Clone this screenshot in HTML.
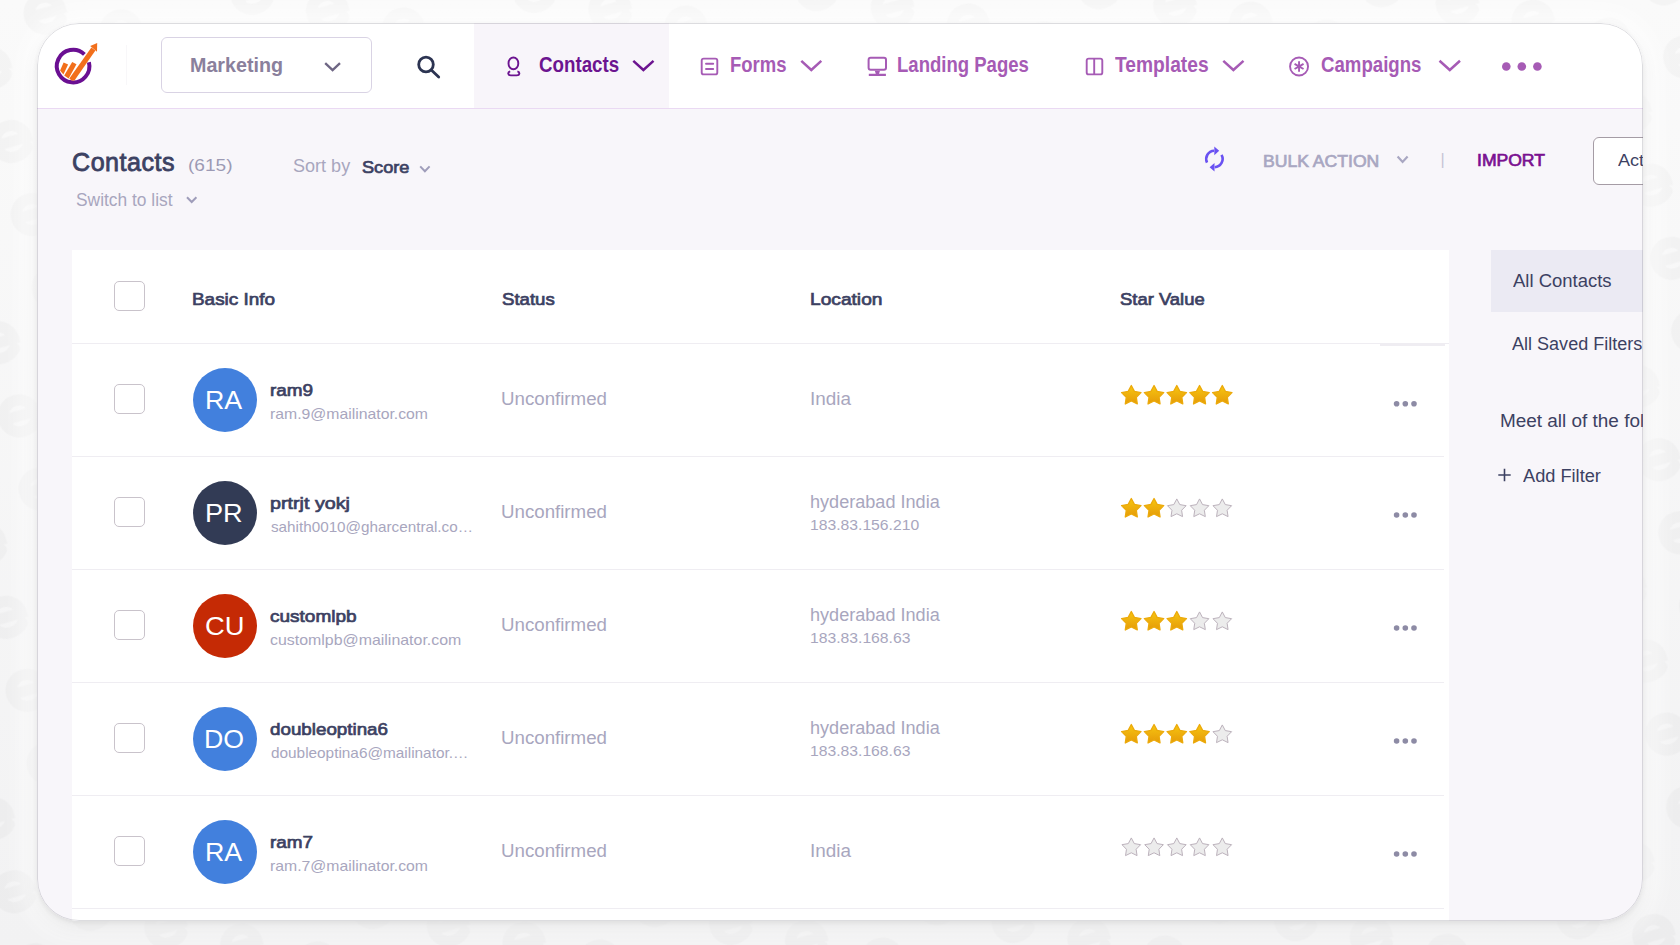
<!DOCTYPE html>
<html lang="en">
<head>
<meta charset="utf-8">
<title>Contacts</title>
<style>
html,body{margin:0;padding:0;}
body{width:1680px;height:945px;overflow:hidden;position:relative;background:#f7f7f8;font-family:"Liberation Sans",sans-serif;}
.bg{position:absolute;left:0;top:0;width:1680px;height:945px;}
.card{position:absolute;left:37px;top:23px;width:1606px;height:898px;border-radius:42px;background:#f8f6fa;overflow:hidden;
  box-shadow:0 8px 16px rgba(60,60,70,.08), 0 2px 4px rgba(60,60,70,.08), 0 0 26px 12px rgba(255,255,255,.75);}
.card::after{content:'';position:absolute;left:0;top:0;right:0;bottom:0;border-radius:42px;border:1px solid rgba(120,120,130,.26);z-index:5;}
.abs{position:absolute;}
.t{position:absolute;white-space:nowrap;transform-origin:0 50%;}
.hdr{left:0;top:0;width:1606px;height:85px;background:#fff;border-bottom:1px solid #ead9f3;}
.navact{left:437px;top:0;width:195px;height:85px;background:#f8f5fa;}
.dd{left:124px;top:14px;width:209px;height:54px;border:1px solid #d9d3e4;border-radius:6px;background:#fff;}
.tbl{left:35px;top:227px;width:1377px;height:700px;background:#fff;}
.line{position:absolute;left:35px;width:1372px;height:1px;background:#efedf2;}
.cb{position:absolute;left:77.3px;width:28.4px;height:28.4px;border:1px solid #c9c3cb;border-radius:5px;background:#fff;}
.av{position:absolute;left:156px;width:64px;height:64px;border-radius:50%;}
.allc{left:1454px;top:227px;width:160px;height:62px;background:#ebeaf3;}
.btn{left:1555.8px;top:114.3px;width:80px;height:45.6px;border:1.2px solid #a59ca5;border-radius:6px;background:#fff;}
.vdiv{left:89px;top:22px;width:1px;height:40px;background:#f8f7f9;}
.clip{position:absolute;left:0;top:0;width:1643px;height:921px;overflow:hidden;}
svg{position:absolute;overflow:visible;}
</style>
</head>
<body>
<svg class="bg" width="1680" height="945" viewBox="0 0 1680 945">
<defs>
<pattern id="pat" width="136" height="76" patternUnits="userSpaceOnUse" patternTransform="translate(10,-8) rotate(-16)">
<g fill="none" stroke="#000" stroke-opacity=".024" stroke-width="11" stroke-linecap="round">
<path id="ee" d="M12 30 H44 A16 16 0 1 0 28 46 Q37 46 42 40"/>
<use href="#ee" x="68" y="38"/>
<use href="#ee" x="68" y="-38"/>
</g>
</pattern>
<linearGradient id="bgg" x1="0" y1="0" x2="0" y2="1"><stop offset="0" stop-color="#fafafa"/><stop offset="1" stop-color="#f2f2f3"/></linearGradient>
</defs>
<rect width="1680" height="945" fill="url(#bgg)"/>
<rect width="1680" height="945" fill="url(#pat)"/>
</svg>
<div class="card">
<div class="abs hdr"></div>
<div class="abs navact"></div>
<div class="abs dd"></div>
<div class="abs vdiv"></div>
<div class="abs tbl"></div>
<div class="abs allc"></div>
<div class="abs btn"></div>
<div class="line" style="top:320px;width:1377px"></div>
<div class="abs" style="left:1343px;top:321px;width:64.5px;height:2px;background:#efedf2"></div>
<div class="line" style="top:433px"></div>
<div class="line" style="top:546px"></div>
<div class="line" style="top:659px"></div>
<div class="line" style="top:772px"></div>
<div class="line" style="top:885px"></div>
<div class="cb" style="top:258px"></div>
<div class="cb" style="top:361px"></div>
<div class="cb" style="top:474px"></div>
<div class="cb" style="top:587px"></div>
<div class="cb" style="top:700px"></div>
<div class="cb" style="top:813px"></div>
<div class="av" style="top:345px;background:#4280dd"></div>
<div class="av" style="top:458px;background:#323b55"></div>
<div class="av" style="top:571px;background:#c52a05"></div>
<div class="av" style="top:684px;background:#4280dd"></div>
<div class="av" style="top:797px;background:#4280dd"></div>
</div>
<div class="clip">
<svg class="ic" width="1680" height="945" viewBox="0 0 1680 945" style="left:0;top:0">
<g id="logo">
<path d="M88.92 62.16 A16.3 16.3 0 1 1 84.42 54.37" fill="none" stroke="#6a0f92" stroke-width="4"/>
<clipPath id="lc"><path d="M40 30 H110 V66 H91 A18 18 0 0 1 55 66 Z" transform="translate(0,0)"/></clipPath>
<g fill="#f26f1b">
<polygon points="60.1,70.6 63.6,62.6 68.1,64.5 63.4,74.6"/>
<polygon points="64.2,75.4 72.2,62 76.5,64.3 68.6,78.4"/>
<polygon points="69.3,78.6 91.4,47.4 95.4,50.6 74.5,80.6 71.6,80.4"/>
<polygon points="97.2,43 90.2,46 97,51.8"/>
</g></g>
<path d="M325.2 63.2 L332.6 70.2 L340 63.2" fill="none" stroke="#6e6684" stroke-width="2.3"/>
<g fill="none" stroke="#2c3452" stroke-width="2.8"><circle cx="426" cy="64.5" r="7.3"/><path d="M431.3 70 L438.7 77.1" stroke-linecap="round"/></g>
<path d="M633.3 60.8 L643.4 70.0 L653.5 60.8" fill="none" stroke="#6c1490" stroke-width="2.5"/>
<path d="M801.3 60.8 L811.3 70.0 L821.3 60.8" fill="none" stroke="#a65bb5" stroke-width="2.5"/>
<path d="M1223.3 60.8 L1233.4 70.0 L1243.5 60.8" fill="none" stroke="#a65bb5" stroke-width="2.5"/>
<path d="M1439.5 60.8 L1449.8 70.0 L1460.0 60.8" fill="none" stroke="#a65bb5" stroke-width="2.5"/>
<g fill="none" stroke="#6c1490" stroke-width="1.9"><ellipse cx="513.4" cy="63.4" rx="4.9" ry="5.9"/><path d="M510.2 71.4 C507.4 72.2 507.6 75.4 511 75.4 H516.6 C520 75.4 520.2 72.2 517.4 71.4"/></g>
<g fill="none" stroke="#a65bb5" stroke-width="1.9"><rect x="701.7" y="58.6" width="15.6" height="15.8" rx="2"/><path d="M706 63.8 H713.2 M706 69 H713.2" stroke-linecap="round"/></g>
<g fill="none" stroke="#a65bb5"><rect x="868.6" y="57.7" width="17.4" height="12" rx="2" stroke-width="2"/></g>
<path d="M874.8 70.7 H880 L879 73.7 H885.9 V76 H868.8 V73.7 H875.8 Z" fill="#a65bb5"/>
<g fill="none" stroke="#a65bb5" stroke-width="1.9"><rect x="1086.7" y="58.6" width="15.6" height="15.8" rx="2"/><path d="M1094.2 58.6 V74.4"/></g>
<g fill="none" stroke="#a65bb5" stroke-width="1.9"><circle cx="1299.05" cy="66.45" r="9"/><path d="M1299.05 61.25 L1299.05 71.65 M1294.55 63.85 L1303.55 69.05 M1303.55 63.85 L1294.55 69.05 " stroke-width="1.9"/></g>
<circle cx="1506.3" cy="66.5" r="4.3" fill="#a65bb5"/>
<circle cx="1521.8" cy="66.5" r="4.3" fill="#a65bb5"/>
<circle cx="1537.4" cy="66.5" r="4.3" fill="#a65bb5"/>
<path d="M420.2 166.4 L424.9 171.2 L429.6 166.4" fill="none" stroke="#9f9dba" stroke-width="2"/>
<path d="M187.0 197.2 L191.7 202.0 L196.4 197.2" fill="none" stroke="#9f9dba" stroke-width="2"/>
<path d="M1397.6 156.6 L1402.6 162.0 L1407.6 156.6" fill="none" stroke="#a9a7c2" stroke-width="2.2"/>
<g fill="none" stroke="#6a52f2" stroke-width="2.6"><path d="M1207.03 162.59 A8.2 8.2 0 0 1 1214.11 150.80"/><path d="M1221.50 154.90 A8.2 8.2 0 0 1 1214.69 167.20"/></g>
<polygon points="1214.3,146.4 1219.2,150.8 1214.3,155.2" fill="#6a52f2"/>
<polygon points="1214.5,162.9 1209.6,167.2 1214.5,171.6" fill="#6a52f2"/>
<path d="M1498.3 475 H1510.7 M1504.5 468.8 V481.2" stroke="#3c4162" stroke-width="1.6" fill="none"/>
<circle cx="1396.6" cy="403.8" r="2.8" fill="#8d8ba5"/>
<circle cx="1405.3" cy="403.8" r="2.8" fill="#8d8ba5"/>
<circle cx="1414" cy="403.8" r="2.8" fill="#8d8ba5"/>
<circle cx="1396.6" cy="515" r="2.8" fill="#8d8ba5"/>
<circle cx="1405.3" cy="515" r="2.8" fill="#8d8ba5"/>
<circle cx="1414" cy="515" r="2.8" fill="#8d8ba5"/>
<circle cx="1396.6" cy="628" r="2.8" fill="#8d8ba5"/>
<circle cx="1405.3" cy="628" r="2.8" fill="#8d8ba5"/>
<circle cx="1414" cy="628" r="2.8" fill="#8d8ba5"/>
<circle cx="1396.6" cy="741" r="2.8" fill="#8d8ba5"/>
<circle cx="1405.3" cy="741" r="2.8" fill="#8d8ba5"/>
<circle cx="1414" cy="741" r="2.8" fill="#8d8ba5"/>
<circle cx="1396.6" cy="854" r="2.8" fill="#8d8ba5"/>
<circle cx="1405.3" cy="854" r="2.8" fill="#8d8ba5"/>
<circle cx="1414" cy="854" r="2.8" fill="#8d8ba5"/>
<defs><linearGradient id="sg" x1="0" y1="0" x2="0" y2="1"><stop offset="0" stop-color="#f7c80f"/><stop offset=".45" stop-color="#efb20d"/><stop offset="1" stop-color="#e59b08"/></linearGradient>
<polygon id="st" points="0.00,-10.20 3.12,-4.29 9.70,-3.15 5.04,1.64 6.00,8.25 0.00,5.30 -6.00,8.25 -5.04,1.64 -9.70,-3.15 -3.12,-4.29" stroke-linejoin="round"/></defs>
<use href="#st" x="1131.30" y="395.70" fill="url(#sg)" stroke="#ecaa0b" stroke-width="1.3"/>
<use href="#st" x="1154.05" y="395.70" fill="url(#sg)" stroke="#ecaa0b" stroke-width="1.3"/>
<use href="#st" x="1176.80" y="395.70" fill="url(#sg)" stroke="#ecaa0b" stroke-width="1.3"/>
<use href="#st" x="1199.55" y="395.70" fill="url(#sg)" stroke="#ecaa0b" stroke-width="1.3"/>
<use href="#st" x="1222.30" y="395.70" fill="url(#sg)" stroke="#ecaa0b" stroke-width="1.3"/>
<use href="#st" x="1131.30" y="508.70" fill="url(#sg)" stroke="#ecaa0b" stroke-width="1.3"/>
<use href="#st" x="1154.05" y="508.70" fill="url(#sg)" stroke="#ecaa0b" stroke-width="1.3"/>
<use href="#st" x="1176.80" y="508.70" fill="#ececec" stroke="#b9afb9" stroke-width="1" transform="translate(1176.80,508.70) scale(.96) translate(-1176.80,-508.70)"/>
<use href="#st" x="1199.55" y="508.70" fill="#ececec" stroke="#b9afb9" stroke-width="1" transform="translate(1199.55,508.70) scale(.96) translate(-1199.55,-508.70)"/>
<use href="#st" x="1222.30" y="508.70" fill="#ececec" stroke="#b9afb9" stroke-width="1" transform="translate(1222.30,508.70) scale(.96) translate(-1222.30,-508.70)"/>
<use href="#st" x="1131.30" y="621.70" fill="url(#sg)" stroke="#ecaa0b" stroke-width="1.3"/>
<use href="#st" x="1154.05" y="621.70" fill="url(#sg)" stroke="#ecaa0b" stroke-width="1.3"/>
<use href="#st" x="1176.80" y="621.70" fill="url(#sg)" stroke="#ecaa0b" stroke-width="1.3"/>
<use href="#st" x="1199.55" y="621.70" fill="#ececec" stroke="#b9afb9" stroke-width="1" transform="translate(1199.55,621.70) scale(.96) translate(-1199.55,-621.70)"/>
<use href="#st" x="1222.30" y="621.70" fill="#ececec" stroke="#b9afb9" stroke-width="1" transform="translate(1222.30,621.70) scale(.96) translate(-1222.30,-621.70)"/>
<use href="#st" x="1131.30" y="734.70" fill="url(#sg)" stroke="#ecaa0b" stroke-width="1.3"/>
<use href="#st" x="1154.05" y="734.70" fill="url(#sg)" stroke="#ecaa0b" stroke-width="1.3"/>
<use href="#st" x="1176.80" y="734.70" fill="url(#sg)" stroke="#ecaa0b" stroke-width="1.3"/>
<use href="#st" x="1199.55" y="734.70" fill="url(#sg)" stroke="#ecaa0b" stroke-width="1.3"/>
<use href="#st" x="1222.30" y="734.70" fill="#ececec" stroke="#b9afb9" stroke-width="1" transform="translate(1222.30,734.70) scale(.96) translate(-1222.30,-734.70)"/>
<use href="#st" x="1131.30" y="847.70" fill="#ececec" stroke="#b9afb9" stroke-width="1" transform="translate(1131.30,847.70) scale(.96) translate(-1131.30,-847.70)"/>
<use href="#st" x="1154.05" y="847.70" fill="#ececec" stroke="#b9afb9" stroke-width="1" transform="translate(1154.05,847.70) scale(.96) translate(-1154.05,-847.70)"/>
<use href="#st" x="1176.80" y="847.70" fill="#ececec" stroke="#b9afb9" stroke-width="1" transform="translate(1176.80,847.70) scale(.96) translate(-1176.80,-847.70)"/>
<use href="#st" x="1199.55" y="847.70" fill="#ececec" stroke="#b9afb9" stroke-width="1" transform="translate(1199.55,847.70) scale(.96) translate(-1199.55,-847.70)"/>
<use href="#st" x="1222.30" y="847.70" fill="#ececec" stroke="#b9afb9" stroke-width="1" transform="translate(1222.30,847.70) scale(.96) translate(-1222.30,-847.70)"/>
</svg>
<span class="t" id="t0" style="left:189.50px;top:52.90px;font-size:21px;line-height:23px;font-weight:700;color:#8a809c;transform:scaleX(0.9373);">Marketing</span>
<span class="t" id="t1" style="left:539.05px;top:51.60px;font-size:22px;line-height:25px;font-weight:700;color:#6c1490;transform:scaleX(0.8514);">Contacts</span>
<span class="t" id="t2" style="left:729.50px;top:51.60px;font-size:22px;line-height:25px;font-weight:700;color:#a65bb5;transform:scaleX(0.8406);">Forms</span>
<span class="t" id="t3" style="left:897.00px;top:51.60px;font-size:22px;line-height:25px;font-weight:700;color:#a65bb5;transform:scaleX(0.8429);">Landing Pages</span>
<span class="t" id="t4" style="left:1115.00px;top:51.60px;font-size:22px;line-height:25px;font-weight:700;color:#a65bb5;transform:scaleX(0.8730);">Templates</span>
<span class="t" id="t5" style="left:1320.50px;top:51.60px;font-size:22px;line-height:25px;font-weight:700;color:#a65bb5;transform:scaleX(0.8469);">Campaigns</span>
<span class="t" id="t6" style="left:72.00px;top:147.50px;font-size:25px;line-height:28px;font-weight:400;color:#3c4162;transform:scaleX(1.0039);letter-spacing:0.5px;-webkit-text-stroke:0.8px #3c4162;">Contacts</span>
<span class="t" id="t7" style="left:187.90px;top:155.50px;font-size:16.2px;line-height:18px;font-weight:400;color:#9c9ab4;transform:scaleX(1.1786);">(615)</span>
<span class="t" id="t8" style="left:293.30px;top:156.30px;font-size:18px;line-height:20px;font-weight:400;color:#a8a6be;transform:scaleX(1.0024);">Sort by</span>
<span class="t" id="t9" style="left:361.50px;top:158.30px;font-size:17px;line-height:19px;font-weight:400;color:#3c4162;transform:scaleX(1.0677);-webkit-text-stroke:0.7px #3c4162;">Score</span>
<span class="t" id="t10" style="left:76.30px;top:189.70px;font-size:17.5px;line-height:20px;font-weight:400;color:#a8a6be;transform:scaleX(0.9924);">Switch to list</span>
<span class="t" id="t11" style="left:1263.00px;top:151.50px;font-size:17px;line-height:19px;font-weight:400;color:#a9a7c2;transform:scaleX(1.0347);-webkit-text-stroke:0.7px #a9a7c2;">BULK ACTION</span>
<span class="t" id="t12" style="left:1440.40px;top:151.00px;font-size:16px;line-height:17px;font-weight:400;color:#c5c3d5;transform:scaleX(1.0000);">|</span>
<span class="t" id="t13" style="left:1476.50px;top:151.20px;font-size:17px;line-height:19px;font-weight:400;color:#7a1090;transform:scaleX(1.0328);-webkit-text-stroke:0.7px #7a1090;">IMPORT</span>
<span class="t" id="t14" style="left:1617.74px;top:150.40px;font-size:17.2px;line-height:20px;font-weight:400;color:#3c4162;transform:scaleX(1.0500);">Act</span>
<span class="t" id="t15" style="left:192.00px;top:289.80px;font-size:17px;line-height:19px;font-weight:400;color:#3c4162;transform:scaleX(1.1123);-webkit-text-stroke:0.7px #3c4162;">Basic Info</span>
<span class="t" id="t16" style="left:501.50px;top:289.80px;font-size:17px;line-height:19px;font-weight:400;color:#3c4162;transform:scaleX(1.0953);-webkit-text-stroke:0.7px #3c4162;">Status</span>
<span class="t" id="t17" style="left:810.00px;top:289.80px;font-size:17px;line-height:19px;font-weight:400;color:#3c4162;transform:scaleX(1.1271);-webkit-text-stroke:0.7px #3c4162;">Location</span>
<span class="t" id="t18" style="left:1119.50px;top:289.80px;font-size:17px;line-height:19px;font-weight:400;color:#3c4162;transform:scaleX(1.0834);-webkit-text-stroke:0.7px #3c4162;">Star Value</span>
<span class="t" id="t19" style="left:1512.50px;top:270.70px;font-size:17.5px;line-height:20px;font-weight:400;color:#3c4162;transform:scaleX(1.0560);">All Contacts</span>
<span class="t" id="t20" style="left:1512.00px;top:333.60px;font-size:17.5px;line-height:20px;font-weight:400;color:#3c4162;transform:scaleX(1.0305);">All Saved Filters</span>
<span class="t" id="t21" style="left:1499.50px;top:411.30px;font-size:17.5px;line-height:20px;font-weight:400;color:#3c4162;transform:scaleX(1.0817);">Meet all of the fol</span>
<span class="t" id="t22" style="left:1523.00px;top:466.40px;font-size:17.5px;line-height:20px;font-weight:400;color:#3c4162;transform:scaleX(1.0397);">Add Filter</span>
<span class="t" id="t23" style="left:205.42px;top:385.30px;font-size:26px;line-height:30px;font-weight:400;color:#ffffff;transform:scaleX(1.0298);">RA</span>
<span class="t" id="t24" style="left:270.05px;top:380.80px;font-size:17px;line-height:19px;font-weight:400;color:#3c4162;transform:scaleX(1.1119);-webkit-text-stroke:0.7px #3c4162;">ram9</span>
<span class="t" id="t25" style="left:269.80px;top:405.00px;font-size:15px;line-height:17px;font-weight:400;color:#a8a6be;transform:scaleX(1.0513);">ram.9@mailinator.com</span>
<span class="t" id="t26" style="left:501.20px;top:389.00px;font-size:17.5px;line-height:20px;font-weight:400;color:#a8a6be;transform:scaleX(1.0680);">Unconfirmed</span>
<span class="t" id="t27" style="left:809.70px;top:388.80px;font-size:17.5px;line-height:20px;font-weight:400;color:#a8a6be;transform:scaleX(1.0797);">India</span>
<span class="t" id="t28" style="left:205.25px;top:498.30px;font-size:26px;line-height:30px;font-weight:400;color:#ffffff;transform:scaleX(1.0446);">PR</span>
<span class="t" id="t29" style="left:270.05px;top:493.80px;font-size:17px;line-height:19px;font-weight:400;color:#3c4162;transform:scaleX(1.1595);-webkit-text-stroke:0.7px #3c4162;">prtrjt yokj</span>
<span class="t" id="t30" style="left:270.80px;top:518.00px;font-size:15px;line-height:17px;font-weight:400;color:#a8a6be;transform:scaleX(1.0164);">sahith0010@gharcentral.co…</span>
<span class="t" id="t31" style="left:501.20px;top:502.00px;font-size:17.5px;line-height:20px;font-weight:400;color:#a8a6be;transform:scaleX(1.0680);">Unconfirmed</span>
<span class="t" id="t32" style="left:810.31px;top:492.00px;font-size:17.5px;line-height:20px;font-weight:400;color:#a8a6be;transform:scaleX(1.0334);">hyderabad India</span>
<span class="t" id="t33" style="left:810.31px;top:516.30px;font-size:15px;line-height:17px;font-weight:400;color:#a8a6be;transform:scaleX(1.0466);">183.83.156.210</span>
<span class="t" id="t34" style="left:205.00px;top:611.30px;font-size:26px;line-height:30px;font-weight:400;color:#ffffff;transform:scaleX(1.0526);">CU</span>
<span class="t" id="t35" style="left:270.00px;top:606.80px;font-size:17px;line-height:19px;font-weight:400;color:#3c4162;transform:scaleX(1.1185);-webkit-text-stroke:0.7px #3c4162;">customlpb</span>
<span class="t" id="t36" style="left:270.30px;top:631.00px;font-size:15px;line-height:17px;font-weight:400;color:#a8a6be;transform:scaleX(1.0610);">customlpb@mailinator.com</span>
<span class="t" id="t37" style="left:501.20px;top:615.00px;font-size:17.5px;line-height:20px;font-weight:400;color:#a8a6be;transform:scaleX(1.0680);">Unconfirmed</span>
<span class="t" id="t38" style="left:810.31px;top:605.00px;font-size:17.5px;line-height:20px;font-weight:400;color:#a8a6be;transform:scaleX(1.0334);">hyderabad India</span>
<span class="t" id="t39" style="left:810.31px;top:629.30px;font-size:15px;line-height:17px;font-weight:400;color:#a8a6be;transform:scaleX(1.0467);">183.83.168.63</span>
<span class="t" id="t40" style="left:204.25px;top:724.30px;font-size:26px;line-height:30px;font-weight:400;color:#ffffff;transform:scaleX(1.0284);">DO</span>
<span class="t" id="t41" style="left:270.45px;top:719.80px;font-size:17px;line-height:19px;font-weight:400;color:#3c4162;transform:scaleX(1.1047);-webkit-text-stroke:0.7px #3c4162;">doubleoptina6</span>
<span class="t" id="t42" style="left:270.80px;top:744.00px;font-size:15px;line-height:17px;font-weight:400;color:#a8a6be;transform:scaleX(1.0231);">doubleoptina6@mailinator.…</span>
<span class="t" id="t43" style="left:501.20px;top:728.00px;font-size:17.5px;line-height:20px;font-weight:400;color:#a8a6be;transform:scaleX(1.0680);">Unconfirmed</span>
<span class="t" id="t44" style="left:810.31px;top:718.00px;font-size:17.5px;line-height:20px;font-weight:400;color:#a8a6be;transform:scaleX(1.0334);">hyderabad India</span>
<span class="t" id="t45" style="left:810.31px;top:742.30px;font-size:15px;line-height:17px;font-weight:400;color:#a8a6be;transform:scaleX(1.0467);">183.83.168.63</span>
<span class="t" id="t46" style="left:205.42px;top:837.30px;font-size:26px;line-height:30px;font-weight:400;color:#ffffff;transform:scaleX(1.0298);">RA</span>
<span class="t" id="t47" style="left:270.05px;top:832.80px;font-size:17px;line-height:19px;font-weight:400;color:#3c4162;transform:scaleX(1.1119);-webkit-text-stroke:0.7px #3c4162;">ram7</span>
<span class="t" id="t48" style="left:269.80px;top:857.00px;font-size:15px;line-height:17px;font-weight:400;color:#a8a6be;transform:scaleX(1.0513);">ram.7@mailinator.com</span>
<span class="t" id="t49" style="left:501.20px;top:841.00px;font-size:17.5px;line-height:20px;font-weight:400;color:#a8a6be;transform:scaleX(1.0680);">Unconfirmed</span>
<span class="t" id="t50" style="left:809.70px;top:840.80px;font-size:17.5px;line-height:20px;font-weight:400;color:#a8a6be;transform:scaleX(1.0797);">India</span>
</div>
</body>
</html>
